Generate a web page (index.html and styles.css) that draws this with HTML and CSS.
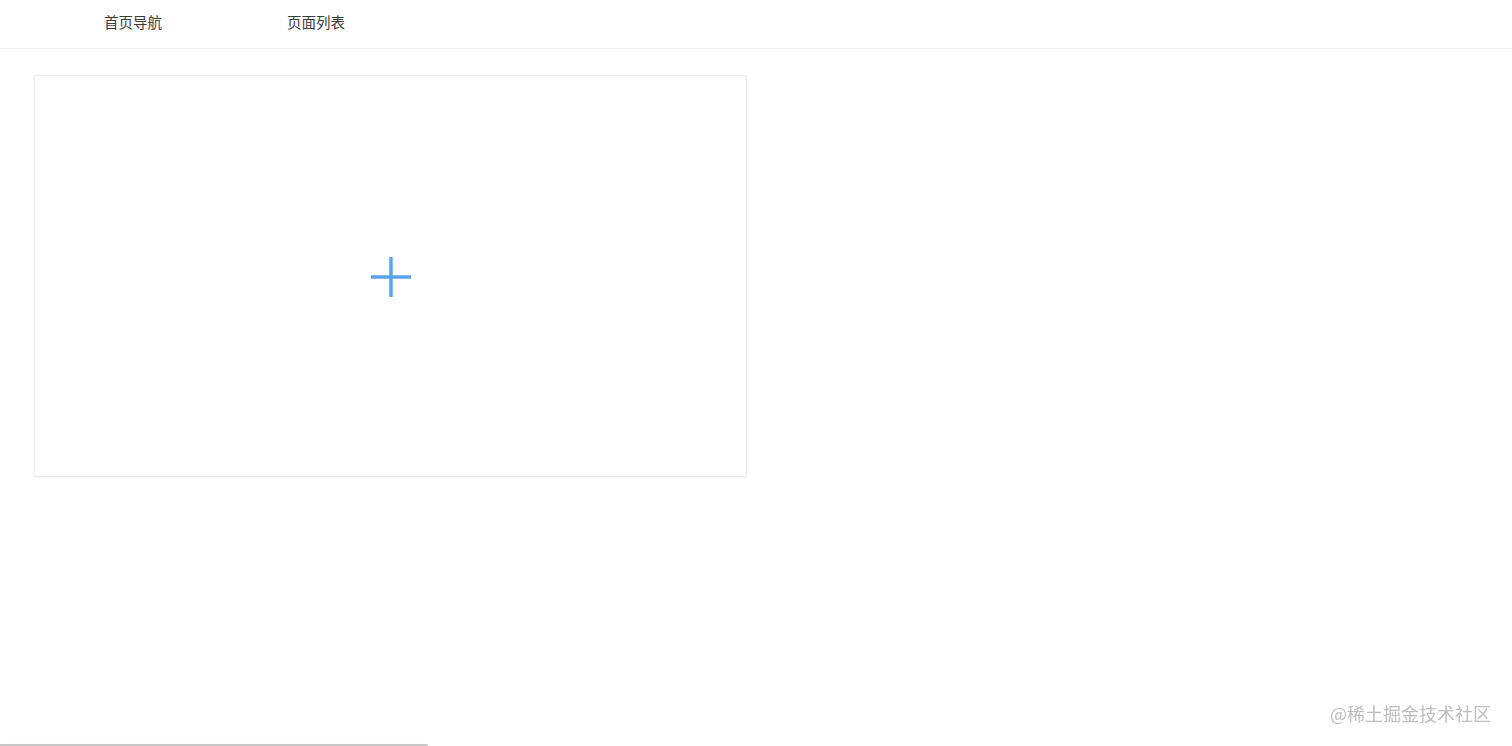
FILE: index.html
```
<!DOCTYPE html>
<html lang="zh">
<head>
<meta charset="utf-8">
<title>页面列表</title>
<link rel="stylesheet" href="styles.css">
</head>
<body>
<header class="header">
  <nav class="nav">
    <a class="nav-item">首页导航</a>
    <a class="nav-item">页面列表</a>
  </nav>
</header>
<main class="main">
  <div class="add-card">
    <svg class="plus" width="40" height="40" viewBox="0 0 40 40">
      <path d="M20 0V40M0 20H40" stroke="#58a4ee" stroke-width="3.4" fill="none"/>
    </svg>
  </div>
</main>
<div class="watermark">@稀土掘金技术社区</div>
<div class="scrollbar"></div>
</body>
</html>
```
FILE: styles.css
```
html, body {
  margin: 0;
  padding: 0;
  background: #fff;
  font-family: "Noto Sans CJK SC", "Liberation Sans", sans-serif;
  height: 100%;
  overflow: hidden;
}
.header {
  height: 48px;
  border-bottom: 1px solid #f0f0f0;
  box-sizing: content-box;
}
.nav {
  display: flex;
  align-items: center;
  height: 100%;
  box-sizing: border-box;
  padding: 0 0 4px 104px;
  gap: 125px;
}
.nav-item {
  font-size: 14.5px;
  color: #3a3a3a;
  line-height: 20px;
  cursor: pointer;
}
.main {
  padding: 26px 34px;
}
.add-card {
  width: 711px;
  height: 400px;
  border: 1px solid #ececec;
  border-radius: 2px;
  box-shadow: 0 1px 3px rgba(0,0,0,0.05);
  display: flex;
  align-items: center;
  justify-content: center;
}
.plus {
  margin-bottom: -1px;
}
.watermark {
  position: fixed;
  right: 21px;
  bottom: 20px;
  font-size: 18px;
  color: #bdbdbd;
}
.scrollbar {
  position: fixed;
  left: 0;
  bottom: 0;
  width: 428px;
  height: 2px;
  background: #c8c8c8;
  border-radius: 0 2px 0 0;
  box-shadow: 0 -6px 12px rgba(0,0,0,0.04);
}
```
